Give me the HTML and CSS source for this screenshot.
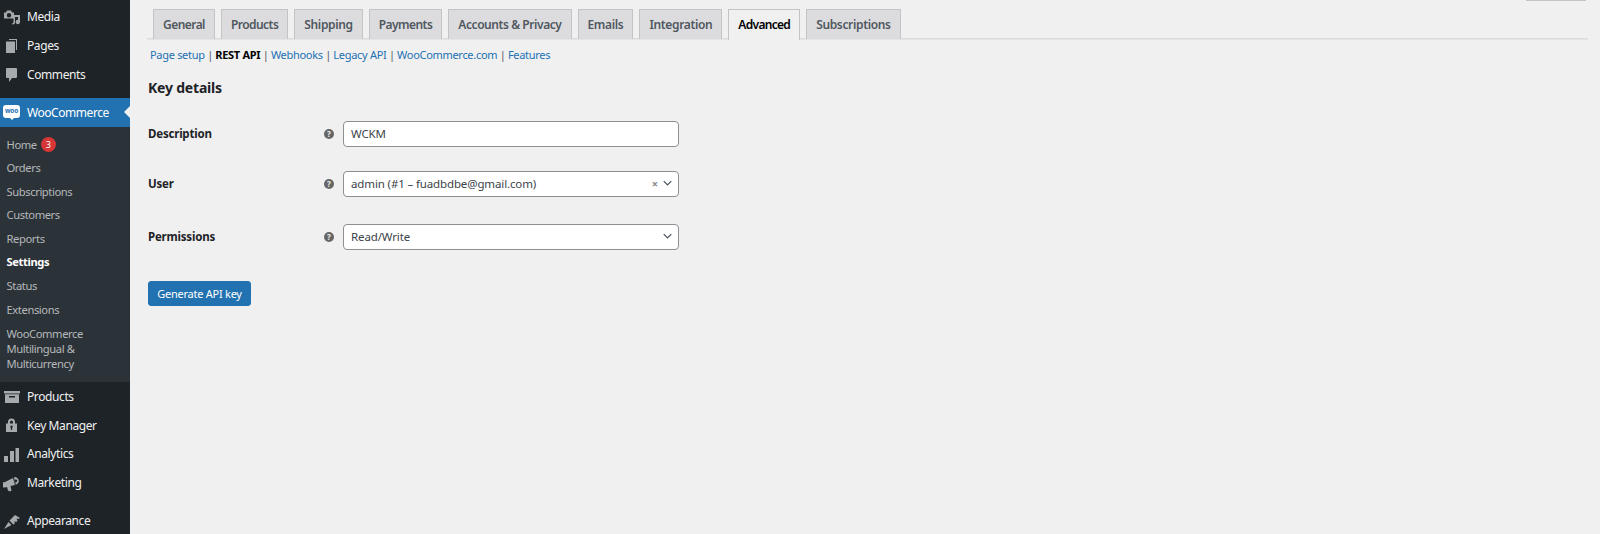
FILE: index.html
```html
<!DOCTYPE html>
<html lang="en">
<head>
<meta charset="utf-8">
<title>Key details</title>
<link rel="stylesheet" href="styles.css">
</head>
<body>
<aside class="sidebar">
  <ul class="menu menu-top">
    <li class="item"><svg class="ico" viewBox="0 0 18 18"><path d="M1 4.500h2L4 2.500h4l1 2h2v6H1zM6 5a2.200 2.200 0 1 0 0 4.400A2.200 2.200 0 0 0 6 5z" fill-rule="evenodd"/><path d="M10.500 7H17v7a2.200 2.200 0 1 1-2-2.200V9h-3v5.500a2 2 0 0 1-3.500 1.300c1-.2 2-.8 2-2.300z"/></svg><span>Media</span></li>
    <li class="item"><svg class="ico" viewBox="0 0 18 18"><path d="M6 2h8v11h-1V3H6z"/><path d="M3 4.500h9V16H3z"/></svg><span>Pages</span></li>
    <li class="item"><svg class="ico" viewBox="0 0 18 18"><path d="M4 3h9a1 1 0 0 1 1 1v8a1 1 0 0 1-1 1H9l-3 4v-4H4a1 1 0 0 1-1-1V4a1 1 0 0 1 1-1z"/></svg><span>Comments</span></li>
  </ul>
  <div class="item item-current">
    <span class="woo"><span class="woo-text">woo</span></span><span>WooCommerce</span>
  </div>
  <ul class="submenu">
    <li class="sub sub-home">Home <b class="badge">3</b></li>
    <li class="sub">Orders</li>
    <li class="sub">Subscriptions</li>
    <li class="sub">Customers</li>
    <li class="sub">Reports</li>
    <li class="sub sub-active">Settings</li>
    <li class="sub">Status</li>
    <li class="sub">Extensions</li>
    <li class="sub sub-long">WooCommerce Multilingual &amp; Multicurrency</li>
  </ul>
  <ul class="menu">
    <li class="item"><svg class="ico" viewBox="0 0 18 18"><path d="M1 4h16v2.500H1z"/><path d="M2 7.200h14V16H2zM6 9v1.500h6V9z" fill-rule="evenodd"/></svg><span>Products</span></li>
    <li class="item"><svg class="ico" viewBox="0 0 18 18"><path d="M5 7.500V6a3.500 3.500 0 0 1 7 0v1.500h2V16H3V7.500zM7 7.500h3V6a1.500 1.500 0 0 0-3 0zM8.500 9.500a1.300 1.300 0 0 0-.6 2.400V14h1.200v-2.100a1.300 1.300 0 0 0-.6-2.400z" fill-rule="evenodd"/></svg><span>Key Manager</span></li>
    <li class="item"><svg class="ico" viewBox="0 0 18 18"><path d="M1 11h4v6H1zM7 6h4v11H7zM12.500 3h3.500v14h-3.500z"/></svg><span>Analytics</span></li>
    <li class="item"><svg class="ico" viewBox="0 0 18 18"><path d="M1 8.500l9-4.500 2 7-4.500 1 1 4.500-1.500 1-2-1-1-3.500-2 .5a2.500 2.500 0 0 1-1-5.500z"/><path d="M11 3.200a4 4 0 0 1 4.800 3.600 4 4 0 0 1-3 3.900zM12.500 5.500a1.400 1.400 0 1 0 1 2.600 1.400 1.400 0 0 0-1-2.600z" fill-rule="evenodd"/></svg><span>Marketing</span></li>
    <li class="item item-gap"><svg class="ico" viewBox="0 0 18 18"><path d="M1 17l4.500-7 3 3zM6.500 8.500L11 4l1-1 5 3-1.500 1-2-.5 1 2.500-1.500 1-1.500-1 .3 2.500-1.500 1z"/></svg><span>Appearance</span></li>
  </ul>
</aside>
<main class="content">
  <div class="screen-tab"></div>
  <nav class="tabs">
    <a class="tab tab-tight">General</a>
    <a class="tab tab-tight">Products</a>
    <a class="tab">Shipping</a>
    <a class="tab tab-tight">Payments</a>
    <a class="tab tab-long">Accounts &amp; Privacy</a>
    <a class="tab">Emails</a>
    <a class="tab">Integration</a>
    <a class="tab tab-active">Advanced</a>
    <a class="tab">Subscriptions</a>
  </nav>
  <ul class="subsub">
    <li><a>Page setup</a> |</li>
    <li><b>REST API</b> |</li>
    <li><a>Webhooks</a> |</li>
    <li><a>Legacy API</a> |</li>
    <li><a>WooCommerce.com</a> |</li>
    <li><a>Features</a></li>
  </ul>
  <form class="form">
    <h2 class="title">Key details</h2>
    <div class="row row-desc">
      <label class="label">Description</label>
      <span class="help">?</span>
      <input class="field" type="text" value="WCKM">
    </div>
    <div class="row row-user">
      <label class="label">User</label>
      <span class="help">?</span>
      <div class="field select">
        <span class="value">admin (#1 – fuadbdbe@gmail.com)</span>
        <span class="clear">×</span>
        <svg class="chev" viewBox="0 0 12 8"><path d="M1 1.500l5 5 5-5" fill="none" stroke="#50575e" stroke-width="1.800"/></svg>
      </div>
    </div>
    <div class="row row-perm">
      <label class="label">Permissions</label>
      <span class="help">?</span>
      <div class="field select">
        <span class="value">Read/Write</span>
        <svg class="chev" viewBox="0 0 12 8"><path d="M1 1.500l5 5 5-5" fill="none" stroke="#50575e" stroke-width="1.800"/></svg>
      </div>
    </div>
    <button class="btn" type="button">Generate API key</button>
  </form>
</main>
</body>
</html>
```
FILE: styles.css
```css
* { box-sizing: border-box; }
html, body { margin: 0; height: 534px; overflow: hidden; }
body {
  display: flex;
  background: #f0f0f1;
  font-family: "Noto Sans", "Open Sans", sans-serif;
  font-size: 12px;
  color: #3c434a;
}
ul { list-style: none; margin: 0; padding: 0; }

.sidebar { width: 130px; flex: none; height: 534px; background: #1d2327; overflow: hidden; }
.menu-top { padding-top: 2.5px; padding-bottom: 9.25px; }
.item {
  display: flex; align-items: center; gap: 6px;
  height: 28.75px; padding-left: 3px;
  color: #f0f0f1; font-size: 12px; letter-spacing: -0.4px;
}
.ico { width: 18px; height: 18px; flex: none; fill: #a7aaad; }
.item-current { position: relative; background: #2271b1; color: #fff; height: 29px; letter-spacing: -0.45px; }
.item-current::after {
  content: ""; position: absolute; right: 0; top: 8px;
  border: 6.5px solid transparent; border-right-color: #f0f0f1; border-left: 0;
}
.woo {
  width: 17px; height: 13px; margin: 0 1px 2px 0; flex: none; background: #fff; border-radius: 3px;
  display: flex; align-items: center; justify-content: center; position: relative;
}
.woo::after {
  content: ""; position: absolute; left: 7px; bottom: -2px;
  border: 2px solid transparent; border-top-color: #fff; border-bottom: 0;
}
.woo-text { color: #2271b1; font-size: 6.5px; font-weight: 700; line-height: 1; letter-spacing: -0.2px; }
.submenu { background: #2c3338; height: 255px; padding-top: 5.5px; }
.sub {
  height: 23.6px; padding-left: 6.5px; line-height: 23.6px;
  color: #b5b8bb; font-size: 11.2px; letter-spacing: -0.4px;
}
.sub-home { display: flex; align-items: center; gap: 4px; }
.sub-active { color: #fff; font-weight: 700; }
.sub-long { height: auto; line-height: 15px; padding-top: 4.5px; padding-right: 30px; }
.badge {
  width: 15px; height: 15px; border-radius: 50%; background: #d63638; color: #fff;
  font-size: 9px; font-weight: 400; line-height: 15px; text-align: center;
}
.item-gap { margin-top: 9.5px; }

.content { flex: 1; position: relative; padding: 9px 12px 0 17px; min-width: 0; }
.screen-tab {
  position: absolute; top: 0; right: 14px; width: 60px; height: 1px; background: #c3c4c7;
}
.tabs {
  display: flex; gap: 6px; height: 30px; padding-left: 6px;
  border-bottom: 1px solid #dcdcde; box-shadow: 0 1px 0 #e4e4e5;
}
.tab {
  height: 30px; padding: 0 9px; line-height: 29px;
  background: #dcdcde; border: 1px solid #c3c4c7; border-bottom: 0;
  color: #50575e; font-size: 12px; letter-spacing: -0.35px; font-weight: 600; white-space: nowrap;
}
.tab-tight { letter-spacing: -0.55px; }
.tab-long { letter-spacing: -0.43px; }
.tab-active { background: #f0f0f1; color: #000; height: 31px; letter-spacing: -0.7px; }
.subsub {
  display: flex; gap: 2.3px; padding-left: 3px; margin-top: 8px; height: 15px; line-height: 15px;
  font-size: 11px; letter-spacing: -0.3px; color: #50575e;
}
.subsub a { color: #2271b1; }
.subsub li b { color: #000; }
.form { padding-left: 1px; }
.title { margin: 17px 0 0; height: 18px; line-height: 18px; font-size: 14px; letter-spacing: -0.2px; font-weight: 700; color: #1d2327; }
.row { display: flex; align-items: center; height: 26px; }
.row-desc { margin-top: 24px; }
.row-user { margin-top: 24px; }
.row-perm { margin-top: 27px; }
.label { width: 176px; padding-bottom: 2px; font-size: 11.5px; letter-spacing: -0.2px; font-weight: 700; color: #1d2327; }
.help {
  width: 10px; height: 10px; margin-right: 9px; border-radius: 50%; background: #666;
  color: #f0f0f1; font-size: 8px; font-weight: 700; line-height: 10px; text-align: center;
}
.field {
  width: 336px; height: 26px; padding: 0 7px 2px; background: #fff;
  border: 1px solid #8c8f94; border-radius: 4px;
  font: 11.5px "Noto Sans", "Open Sans", sans-serif; letter-spacing: -0.13px; color: #3c434a;
}
.select { display: flex; align-items: center; }
.value { flex: 1; }
.clear { color: #888; font-size: 11px; margin-right: 5px; font-weight: 700; }
.chev { width: 9px; height: 6px; margin-right: -1px; }
.btn {
  display: block; margin-top: 31px; width: 103px; height: 25px; padding: 0;
  background: #2271b1; border: 1px solid #2271b1; border-radius: 3px;
  color: #fff; font: 11px "Noto Sans", "Open Sans", sans-serif; letter-spacing: -0.25px;
}
```
